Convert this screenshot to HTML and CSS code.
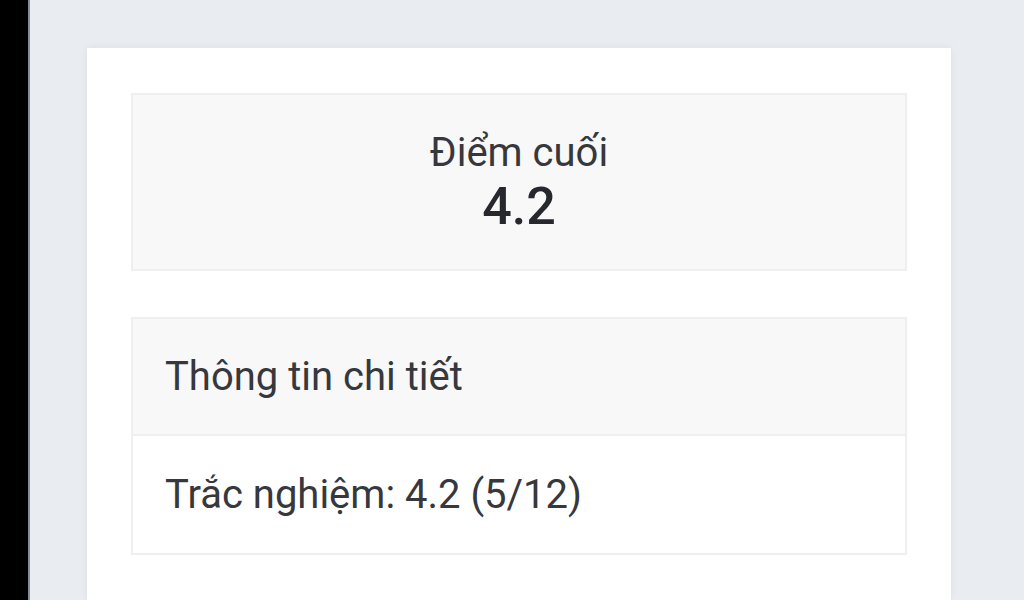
FILE: index.html
```html
<!DOCTYPE html>
<html lang="vi">
<head>
<meta charset="utf-8">
<link rel="stylesheet" href="styles.css">
</head>
<body>
<div class="sidebar"></div>
<main class="main">
  <section class="card">
    <div class="score-box">
      <div class="score-label">Điểm cuối</div>
      <div class="score-value">4.2</div>
    </div>
    <div class="detail">
      <div class="detail-head">Thông tin chi tiết</div>
      <div class="detail-body">Trắc nghiệm: 4.2 (5/12)</div>
    </div>
  </section>
</main>
</body>
</html>
```
FILE: styles.css
```css
html, body {
  margin: 0;
  height: 600px;
  overflow: hidden;
}
body {
  display: flex;
  font-family: Roboto, "Noto Sans", sans-serif;
  color: #36383d;
  background: #e9ecf1;
}
.sidebar {
  width: 28px;
  flex: none;
  background: #000;
  border-right: 2px solid #8a8d92;
}
.main {
  flex: 1;
  background: #e9ecf1;
  padding: 48px 73px 0 57px;
  overflow: hidden;
}
.card {
  background: #fff;
  height: 552px;
  box-sizing: border-box;
  padding: 45px 44px 0;
  box-shadow: 0 0 8px rgba(0, 0, 0, 0.06);
}
.score-box {
  height: 178px;
  box-sizing: border-box;
  background: #f8f8f8;
  border: 2px solid #efefef;
  display: flex;
  flex-direction: column;
  align-items: center;
  padding-top: 34px;
}
.score-label {
  font-size: 40px;
  line-height: 48px;
}
.score-value {
  font-size: 52px;
  font-weight: 500;
  line-height: 60px;
  color: #26282d;
}
.detail {
  margin-top: 46px;
  border: 2px solid #efefef;
}
.detail-head {
  height: 117px;
  box-sizing: border-box;
  background: #f8f8f8;
  border-bottom: 2px solid #efefef;
  display: flex;
  align-items: center;
  padding-left: 32px;
  font-size: 40px;
}
.detail-body {
  height: 117px;
  box-sizing: border-box;
  display: flex;
  align-items: center;
  padding-left: 32px;
  font-size: 40px;
}
```
